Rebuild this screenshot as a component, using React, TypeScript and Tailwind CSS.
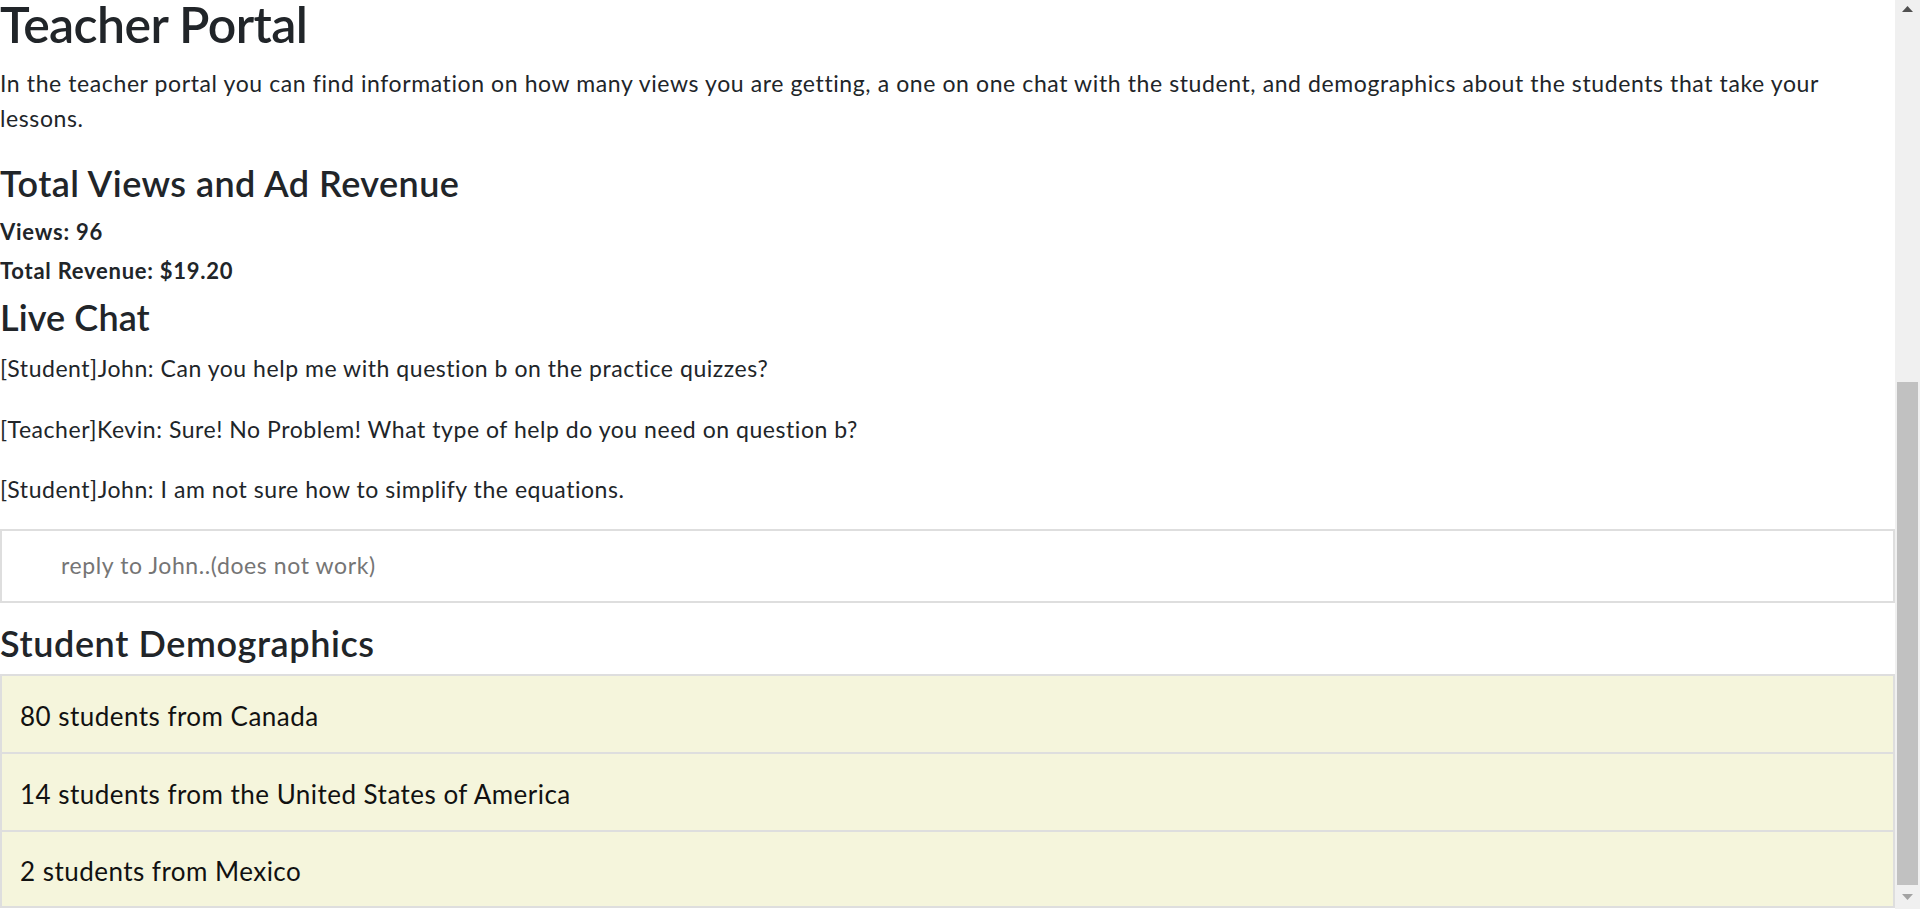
import React from "react";

const font = { fontFamily: "Lato, 'Open Sans', 'Noto Sans', sans-serif" };

export default function App() {
  return (
    <div
      className="flex h-[909px] w-[1920px] overflow-hidden bg-white text-[#212529]"
      style={font}
    >
      <main className="min-w-0 flex-1 overflow-hidden">
        <h1 className="text-[50px] font-semibold leading-[48px] tracking-[-0.6px]">
          Teacher Portal
        </h1>
        <p className="mt-[18px] text-[23px] leading-[34.5px] tracking-[0.6px]">
          In the teacher portal you can find information on how many views you are getting, a one on one chat with the student, and demographics about the students that take your
          <br />
          lessons.
        </p>
        <h3 className="mt-[27px] text-[36px] font-semibold leading-[43px] tracking-[0.45px]">
          Total Views and Ad Revenue
        </h3>
        <div className="mt-[7px] text-[22px] font-bold leading-[39px] tracking-[0.75px]">
          Views: 96
        </div>
        <div className="text-[22px] font-bold leading-[39px] tracking-[0.75px]">
          Total Revenue: $19.20
        </div>
        <h3 className="mt-[6px] text-[36px] font-semibold leading-[43px] tracking-[0.1px]">
          Live Chat
        </h3>
        <div className="mt-[12px] flex flex-col gap-[26px] text-[23px] leading-[34.5px] tracking-[0.54px]">
          <p>[Student]John: Can you help me with question b on the practice quizzes?</p>
          <p>[Teacher]Kevin: Sure! No Problem! What type of help do you need on question b?</p>
          <p>[Student]John: I am not sure how to simplify the equations.</p>
        </div>
        <div className="mt-[22px] flex h-[74px] items-center border-2 border-[#dedede] pl-[59px]">
          <input
            className="w-full bg-transparent text-[23px] tracking-[0.6px] text-[#333] outline-none placeholder:text-[#757575]"
            style={font}
            placeholder="reply to John..(does not work)"
          />
        </div>
        <h3 className="mt-[19px] text-[36px] font-semibold leading-[43px] tracking-[0.6px]">
          Student Demographics
        </h3>
        <ul className="mt-[9px]">
          {[
            "80 students from Canada",
            "14 students from the United States of America",
            "2 students from Mexico",
          ].map((t, i) => (
            <li
              key={t}
              className={
                i === 2
                  ? "flex h-[78px] items-center border-x-2 border-y-2 border-[#dedede] bg-[#f5f5dc] pl-[18px] pt-[5px] text-[26px] tracking-[0.47px] text-[#111]"
                  : "flex h-[78px] items-center border-x-2 border-t-2 border-[#dedede] bg-[#f5f5dc] pl-[18px] pt-[5px] text-[26px] tracking-[0.47px] text-[#111]"
              }
            >
              {t}
            </li>
          ))}
        </ul>
      </main>
      <div className="flex h-[909px] w-[25px] shrink-0 flex-col items-center bg-[#f0f0f0]">
        <div className="flex h-[17px] w-full items-center justify-center">
          <svg width="11" height="6" viewBox="0 0 11 6">
            <polygon points="5.5,0 11,6 0,6" fill="#505050" />
          </svg>
        </div>
        <div className="h-[365px]" />
        <div className="h-[503px] w-[21px] bg-[#c1c1c1]" />
        <div className="flex w-full flex-1 items-center justify-center">
          <svg width="11" height="6" viewBox="0 0 11 6">
            <polygon points="0,0 11,0 5.5,6" fill="#a3a3a3" />
          </svg>
        </div>
      </div>
    </div>
  );
}
